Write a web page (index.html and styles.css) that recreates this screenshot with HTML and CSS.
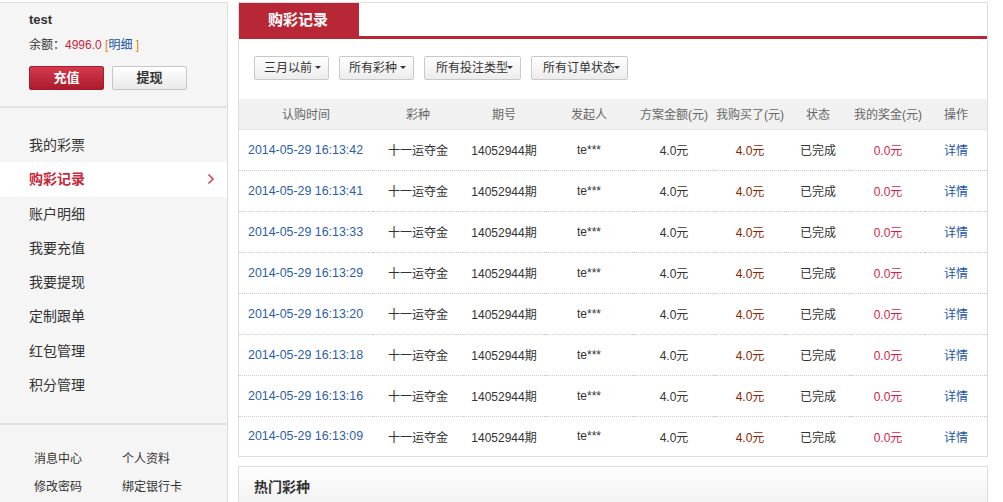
FILE: index.html
```html
<!DOCTYPE html>
<html lang="zh">
<head>
<meta charset="utf-8">
<title>购彩记录</title>
<link rel="stylesheet" href="styles.css">
</head>
<body>
<div class="page">
  <aside class="side">
    <div class="user">
      <div class="uname">test</div>
      <div class="balance">余额：<span class="money">4996.0</span> <span class="br">[</span><a class="blue">明细</a><span class="br"> ]</span></div>
      <div class="btns">
        <a class="btn-red">充值</a>
        <a class="btn-grey">提现</a>
      </div>
    </div>
    <ul class="menu">
      <li>我的彩票</li>
      <li class="active">购彩记录<svg class="chev" width="8" height="12" viewBox="0 0 8 12"><path d="M1.5 1.5 L6 6 L1.5 10.5" fill="none" stroke="#d6405a" stroke-width="1.6"/></svg></li>
      <li>账户明细</li>
      <li>我要充值</li>
      <li>我要提现</li>
      <li>定制跟单</li>
      <li>红包管理</li>
      <li>积分管理</li>
    </ul>
    <div class="links">
      <a>消息中心</a><a>个人资料</a>
      <a>修改密码</a><a>绑定银行卡</a>
    </div>
  </aside>
  <main class="main">
    <section class="box">
      <div class="tabs"><span class="tab">购彩记录</span></div>
      <div class="filters">
        <span class="sel w75">三月以前<i class="caret"></i></span>
        <span class="sel w75">所有彩种<i class="caret"></i></span>
        <span class="sel w97">所有投注类型<i class="caret"></i></span>
        <span class="sel w97">所有订单状态<i class="caret"></i></span>
      </div>
      <table class="grid">
        <colgroup>
          <col style="width:134px"><col style="width:90px"><col style="width:82px"><col style="width:88px"><col style="width:82px"><col style="width:70px"><col style="width:66px"><col style="width:74px"><col style="width:62px">
        </colgroup>
        <thead>
          <tr><th>认购时间</th><th>彩种</th><th>期号</th><th>发起人</th><th>方案金额(元)</th><th>我购买了(元)</th><th>状态</th><th>我的奖金(元)</th><th>操作</th></tr>
        </thead>
        <tbody>
          <tr><td class="time">2014-05-29 16:13:42</td><td>十一运夺金</td><td>14052944期</td><td>te***</td><td>4.0元</td><td class="brown">4.0元</td><td>已完成</td><td class="red">0.0元</td><td class="link">详情</td></tr>
          <tr><td class="time">2014-05-29 16:13:41</td><td>十一运夺金</td><td>14052944期</td><td>te***</td><td>4.0元</td><td class="brown">4.0元</td><td>已完成</td><td class="red">0.0元</td><td class="link">详情</td></tr>
          <tr><td class="time">2014-05-29 16:13:33</td><td>十一运夺金</td><td>14052944期</td><td>te***</td><td>4.0元</td><td class="brown">4.0元</td><td>已完成</td><td class="red">0.0元</td><td class="link">详情</td></tr>
          <tr><td class="time">2014-05-29 16:13:29</td><td>十一运夺金</td><td>14052944期</td><td>te***</td><td>4.0元</td><td class="brown">4.0元</td><td>已完成</td><td class="red">0.0元</td><td class="link">详情</td></tr>
          <tr><td class="time">2014-05-29 16:13:20</td><td>十一运夺金</td><td>14052944期</td><td>te***</td><td>4.0元</td><td class="brown">4.0元</td><td>已完成</td><td class="red">0.0元</td><td class="link">详情</td></tr>
          <tr><td class="time">2014-05-29 16:13:18</td><td>十一运夺金</td><td>14052944期</td><td>te***</td><td>4.0元</td><td class="brown">4.0元</td><td>已完成</td><td class="red">0.0元</td><td class="link">详情</td></tr>
          <tr><td class="time">2014-05-29 16:13:16</td><td>十一运夺金</td><td>14052944期</td><td>te***</td><td>4.0元</td><td class="brown">4.0元</td><td>已完成</td><td class="red">0.0元</td><td class="link">详情</td></tr>
          <tr><td class="time">2014-05-29 16:13:09</td><td>十一运夺金</td><td>14052944期</td><td>te***</td><td>4.0元</td><td class="brown">4.0元</td><td>已完成</td><td class="red">0.0元</td><td class="link">详情</td></tr>
        </tbody>
      </table>
    </section>
    <section class="hot">
      <h3>热门彩种</h3>
    </section>
  </main>
</div>
</body>
</html>
```

FILE: styles.css
```css
* { box-sizing: border-box; }
html, body { margin: 0; padding: 0; background: #fff; }
body {
  font-family: "Liberation Sans", Arial, "Noto Sans CJK SC", sans-serif;
  font-size: 12px;
  color: #333;
  overflow: hidden;
}
a { text-decoration: none; cursor: pointer; }
.page {
  display: flex;
  align-items: flex-start;
  gap: 10px;
  padding-top: 2px;
  height: 502px;
}
.side {
  width: 228px;
  height: 520px;
  flex: none;
  background: #f5f5f5;
  border-top: 1px solid #ddd;
  border-right: 1px solid #ddd;
}
.user {
  padding: 8px 0 16px 29px;
  border-bottom: 2px solid #e2e2e2;
}
.uname { font-size: 13px; font-weight: bold; line-height: 18px; color: #333; }
.balance { margin-top: 7px; line-height: 18px; color: #333; }
.money { color: #c8283c; }
.br { color: #e08a00; }
.blue { color: #1a54a8; }
.btns { display: flex; gap: 8px; margin-top: 12px; }
.btn-red, .btn-grey {
  width: 75px; height: 24px; line-height: 22px; text-align: center;
  font-size: 13px; font-weight: bold; border-radius: 2px;
}
.btn-red {
  color: #fff;
  background: linear-gradient(#d6394d, #a91c2c);
  border: 1px solid #a81b2b;
}
.btn-grey {
  color: #333;
  background: linear-gradient(#fff, #e9e9e9);
  border: 1px solid #c6c6c6;
}
.menu {
  list-style: none; margin: 0; padding: 20px 0 21px;
  border-bottom: 2px solid #e2e2e2;
}
.menu li {
  height: 34.3px; line-height: 34px; padding-left: 29px;
  font-size: 14px; color: #333; position: relative;
}
.menu li.active {
  background: #fff; color: #c8283c; font-weight: bold;
}
.chev { position: absolute; right: 12px; top: 11px; }
.links {
  display: grid; grid-template-columns: 88px 88px;
  padding: 20px 0 0 34px; line-height: 28px; color: #333;
}
.main { width: 750px; flex: none; }
.box { border: 1px solid #ddd; }
.tabs { height: 36px; border-bottom: 3px solid #b82735; display: flex; }
.tab {
  width: 120px; height: 33px; background: #b82735; color: #fff;
  font-size: 15px; font-weight: bold; line-height: 33px; padding-left: 29px;
}
.filters { display: flex; gap: 10px; padding: 17px 0 19px 15px; }
.sel {
  height: 24px; line-height: 22px; border: 1px solid #c9c9c9; border-radius: 2px;
  background: linear-gradient(#fff, #ececec); color: #333; padding-left: 9px; position: relative;
}
.w75 { width: 75px; }
.w97 { width: 97px; padding-left: 11px; }
.caret {
  position: absolute; right: 7px; top: 9px; width: 0; height: 0;
  border-left: 3px solid transparent; border-right: 3px solid transparent; border-top: 3px solid #333;
}
.grid { width: 748px; table-layout: fixed; border-collapse: collapse; }
.grid th {
  height: 30px; background: #f1f1f1; color: #666; font-weight: normal; text-align: center;
  border-bottom: 1px solid #e6e6e6; padding: 0;
}
.grid td {
  height: 41px; text-align: center; color: #333; border-bottom: 1px dotted #ccc; padding: 0;
}
.grid tbody tr:last-child td { border-bottom: none; height: 40px; }
.grid td.time { text-align: left; padding-left: 9px; color: #2d5da8; font-size: 12.4px; }
.grid td.brown { color: #8b2500; }
.grid td.red { color: #d41e48; }
.grid td.link { color: #1a54a8; }
.hot {
  margin-top: 9px; height: 40px; border: 1px solid #ddd;
  background: linear-gradient(#fff, #f2f2f2);
}
.hot h3 { margin: 0; padding: 11px 0 0 15px; font-size: 14px; line-height: 18px; color: #333; }
```
